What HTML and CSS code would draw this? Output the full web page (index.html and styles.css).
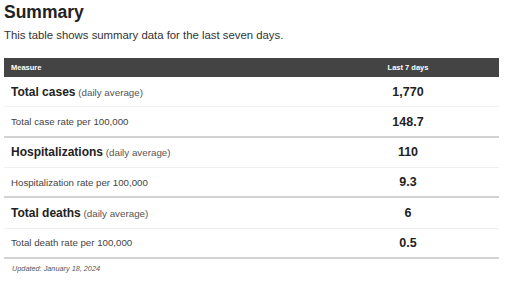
FILE: index.html
```html
<!DOCTYPE html>
<html>
<head>
<meta charset="utf-8">
<link rel="stylesheet" href="styles.css">
</head>
<body>
<div class="page">
  <h1 class="title">Summary</h1>
  <p class="intro">This table shows summary data for the last seven days.</p>
  <table class="summary">
    <thead>
      <tr><th class="measure">Measure</th><th class="value">Last 7 days</th></tr>
    </thead>
    <tbody>
      <tr class="main"><td class="measure"><strong>Total cases</strong> <span class="note">(daily average)</span></td><td class="value">1,770</td></tr>
      <tr class="rate"><td class="measure">Total case rate per 100,000</td><td class="value">148.7</td></tr>
      <tr class="main"><td class="measure"><strong>Hospitalizations</strong> <span class="note">(daily average)</span></td><td class="value">110</td></tr>
      <tr class="rate"><td class="measure">Hospitalization rate per 100,000</td><td class="value">9.3</td></tr>
      <tr class="main"><td class="measure"><strong>Total deaths</strong> <span class="note">(daily average)</span></td><td class="value">6</td></tr>
      <tr class="rate"><td class="measure">Total death rate per 100,000</td><td class="value">0.5</td></tr>
    </tbody>
  </table>
  <p class="updated">Updated: January 18, 2024</p>
</div>
</body>
</html>
```
FILE: styles.css
```css
html, body { margin: 0; padding: 0; background: #fff; }
body { font-family: "Liberation Sans", Arial, sans-serif; color: #222; }
.page { padding: 0 12px 0 4px; }
.title { margin: 0; padding-top: 1.5px; font-size: 17.5px; line-height: 20px; font-weight: bold; color: #222; }
.intro { margin: 6.5px 0 0 0; font-size: 11.35px; line-height: 14px; color: #333; }
.summary { margin-top: 16px; width: 495px; border-collapse: collapse; }
.summary th { background: #444; color: #fff; font-size: 7.5px; font-weight: bold; height: 19px; padding: 0 7px; }
.summary th.measure { text-align: left; }
.summary th.value, .summary td.value { text-align: center; width: 168px; }
.summary td { padding: 0 7px; }
.summary tr.main td { height: 29.35px; border-bottom: 1px solid #efefef; }
.summary tr.rate td { height: 28.35px; border-bottom: 2px solid #d2d2d2; }
.summary tr.main td.measure { font-size: 9.8px; color: #555; }
.summary tr.main strong { font-size: 12px; color: #222; }
.summary tr.rate td.measure { font-size: 9.7px; color: #444; }
.summary td.value { font-size: 12.5px; font-weight: bold; color: #222; }
.note { color: #555; }
.updated { margin: 5px 0 0 8px; font-size: 7.3px; font-style: italic; color: #555; }
```
